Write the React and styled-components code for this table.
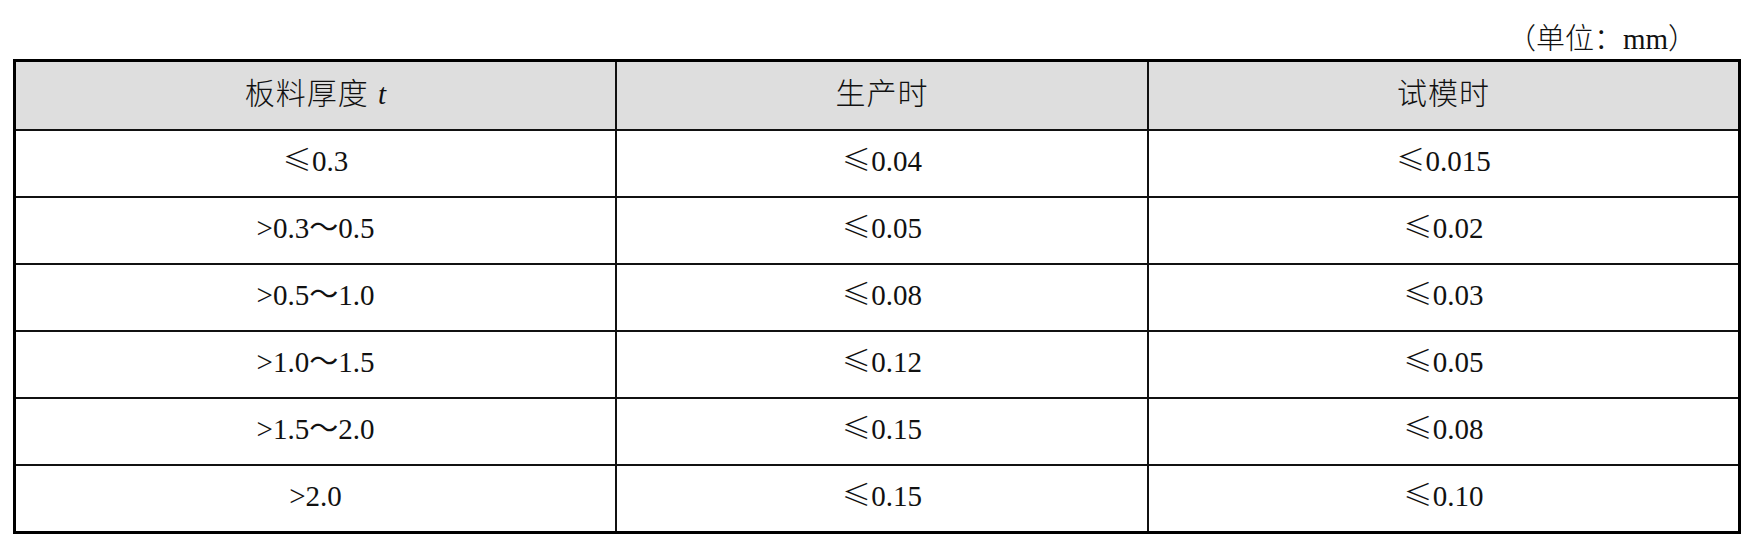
import React from "react";
import styled, { createGlobalStyle } from "styled-components";

const rows = [
  ["≤0.3", "≤0.04", "≤0.015"],
  [">0.3～0.5", "≤0.05", "≤0.02"],
  [">0.5～1.0", "≤0.08", "≤0.03"],
  [">1.0～1.5", "≤0.12", "≤0.05"],
  [">1.5～2.0", "≤0.15", "≤0.08"],
  [">2.0", "≤0.15", "≤0.10"],
];

// the ≤ sign is set in the CJK face, as in the printed table
function Value({ text }) {
  if (text.startsWith("≤")) {
    return (
      <Text>
        <Sym>≤</Sym>
        {text.slice(1)}
      </Text>
    );
  }
  return <Text>{text}</Text>;
}

function App() {
  return (
    <>
      <GlobalStyle />
      <Page>
        <Caption>（单位：mm）</Caption>
        <Grid>
          <Cell $head>
            <Text>
              <Han>板料厚度</Han> <Var>t</Var>
            </Text>
          </Cell>
          <Cell $head>
            <Text>
              <Han>生产时</Han>
            </Text>
          </Cell>
          <Cell $head $last>
            <Text>
              <Han>试模时</Han>
            </Text>
          </Cell>
          {rows.map((row, i) =>
            row.map((text, j) => (
              <Cell
                key={i + "-" + j}
                $last={j === row.length - 1}
                $bottom={i === rows.length - 1}
              >
                <Value text={text} />
              </Cell>
            ))
          )}
        </Grid>
      </Page>
    </>
  );
}

const GlobalStyle = createGlobalStyle`
  body {
    margin: 0;
    background: #ffffff;
  }
`;

const Page = styled.div`
  padding: 0 13px;
  font-family: "Liberation Serif", "Noto Sans CJK SC", serif;
  color: #111;
`;

const Caption = styled.div`
  display: flex;
  justify-content: flex-end;
  padding: 23px 44px 0 0;
  height: 36px;
  line-height: 32px;
  font-size: 29px;
  font-weight: 300;
`;

const Grid = styled.div`
  display: grid;
  grid-template-columns: 601px 532px 1fr;
  border: 3px solid #000;
`;

const Cell = styled.div`
  box-sizing: border-box;
  display: flex;
  align-items: center;
  justify-content: center;
  padding-bottom: 6px;
  height: ${(p) => (p.$head ? "69px" : p.$bottom ? "65px" : "67px")};
  border-right: ${(p) => (p.$last ? "none" : "2px solid #111")};
  border-bottom: ${(p) => (p.$bottom ? "none" : "2px solid #111")};
  background: ${(p) => (p.$head ? "#dedede" : "#ffffff")};
  font-size: 29px;
`;

const Text = styled.span`
  white-space: pre;
  line-height: 32px;
`;

const Han = styled.span`
  font-family: "Noto Sans CJK SC", sans-serif;
  font-weight: 300;
  font-size: 30px;
  letter-spacing: 1px;
`;

const Sym = styled.span`
  font-family: "Noto Sans CJK SC", sans-serif;
  font-weight: 300;
  line-height: 0;
`;

const Var = styled.i`
  margin-left: 2px;
`;

export default App;
